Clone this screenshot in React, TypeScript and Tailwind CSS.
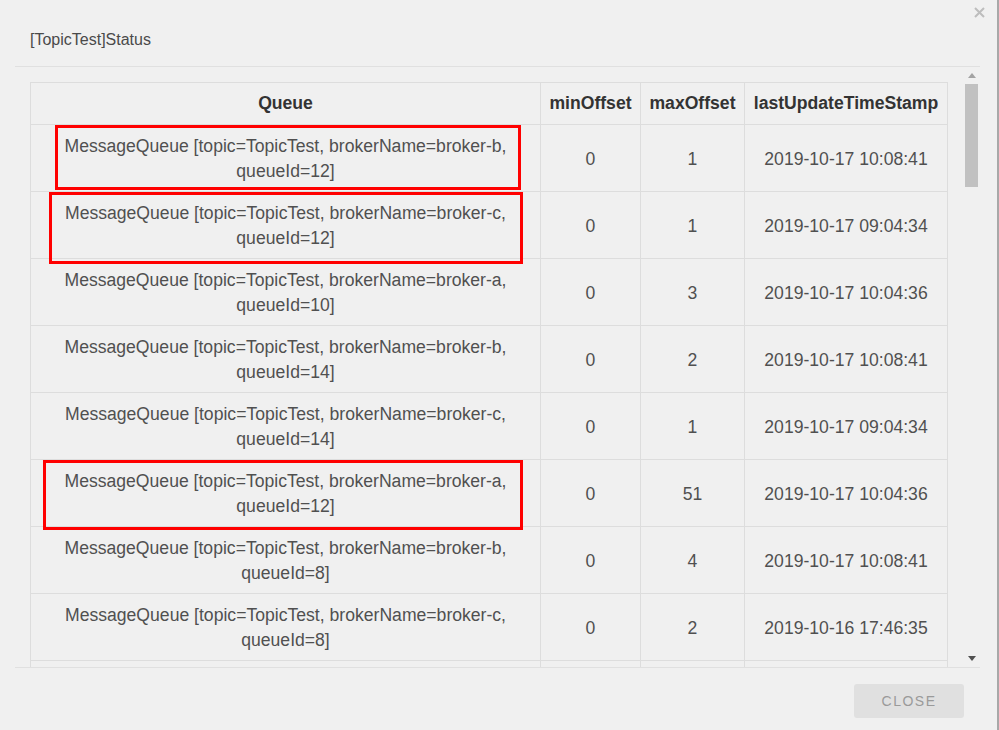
import React from "react";

type Row = { q1: string; q2: string; min: string; max: string; ts: string };

const rows: Row[] = [
  { q1: "MessageQueue [topic=TopicTest, brokerName=broker-b,", q2: "queueId=12]", min: "0", max: "1", ts: "2019-10-17 10:08:41" },
  { q1: "MessageQueue [topic=TopicTest, brokerName=broker-c,", q2: "queueId=12]", min: "0", max: "1", ts: "2019-10-17 09:04:34" },
  { q1: "MessageQueue [topic=TopicTest, brokerName=broker-a,", q2: "queueId=10]", min: "0", max: "3", ts: "2019-10-17 10:04:36" },
  { q1: "MessageQueue [topic=TopicTest, brokerName=broker-b,", q2: "queueId=14]", min: "0", max: "2", ts: "2019-10-17 10:08:41" },
  { q1: "MessageQueue [topic=TopicTest, brokerName=broker-c,", q2: "queueId=14]", min: "0", max: "1", ts: "2019-10-17 09:04:34" },
  { q1: "MessageQueue [topic=TopicTest, brokerName=broker-a,", q2: "queueId=12]", min: "0", max: "51", ts: "2019-10-17 10:04:36" },
  { q1: "MessageQueue [topic=TopicTest, brokerName=broker-b,", q2: "queueId=8]", min: "0", max: "4", ts: "2019-10-17 10:08:41" },
  { q1: "MessageQueue [topic=TopicTest, brokerName=broker-c,", q2: "queueId=8]", min: "0", max: "2", ts: "2019-10-16 17:46:35" },
];

export default function App() {
  return (
    <div
      className="w-[999px] h-[730px] bg-[#f0f0f0] border-r-2 border-[#a8a8a8] flex flex-col overflow-hidden"
      style={{ fontFamily: '"Liberation Sans", Arial, sans-serif' }}
    >
      {/* Header */}
      <div className="h-[66px] flex flex-row justify-between shrink-0">
        <div className="pl-[30px] pt-[28px] text-[16px] leading-6 text-[#4a4a4a]">[TopicTest]Status</div>
        <div className="pt-[7px] pr-[12px]">
          <svg width="11" height="11" viewBox="0 0 11 11">
            <path d="M1 1 L10 10 M10 1 L1 10" stroke="#bdbdbd" strokeWidth="2" />
          </svg>
        </div>
      </div>

      {/* Content */}
      <div className="ml-[15px] w-[965px] h-[602px] shrink-0 border-y border-[#e0e0e0] flex flex-row overflow-hidden">
        <div className="flex-1 overflow-hidden pl-[15px] pt-[15px]">
          <div className="relative w-[917px]">
            <table className="table-fixed border-collapse w-[917px] text-[17.6px] text-[#505050]">
              <colgroup>
                <col className="w-[510px]" />
                <col className="w-[100px]" />
                <col className="w-[104px]" />
                <col className="w-[203px]" />
              </colgroup>
              <thead>
                <tr>
                  <th className="border border-[#dddddd] py-[8px] leading-[25px] font-bold text-[#333333] text-center">Queue</th>
                  <th className="border border-[#dddddd] py-[8px] leading-[25px] font-bold text-[#333333] text-center">minOffset</th>
                  <th className="border border-[#dddddd] py-[8px] leading-[25px] font-bold text-[#333333] text-center">maxOffset</th>
                  <th className="border border-[#dddddd] py-[8px] leading-[25px] font-bold text-[#333333] text-center whitespace-nowrap">lastUpdateTimeStamp</th>
                </tr>
              </thead>
              <tbody>
                {rows.map((r, i) => (
                  <tr key={i}>
                    <td className="border border-[#dddddd] pt-[9px] pb-[7px] text-center leading-[25px] whitespace-nowrap">
                      <div>{r.q1}</div>
                      <div>{r.q2}</div>
                    </td>
                    <td className="border border-[#dddddd] pt-[9px] pb-[7px] text-center leading-[25px]">{r.min}</td>
                    <td className="border border-[#dddddd] pt-[9px] pb-[7px] text-center leading-[25px]">{r.max}</td>
                    <td className="border border-[#dddddd] pt-[9px] pb-[7px] text-center leading-[25px] whitespace-nowrap">{r.ts}</td>
                  </tr>
                ))}
                <tr>
                  <td className="border border-[#dddddd] h-[66px]"></td>
                  <td className="border border-[#dddddd] h-[66px]"></td>
                  <td className="border border-[#dddddd] h-[66px]"></td>
                  <td className="border border-[#dddddd] h-[66px]"></td>
                </tr>
              </tbody>
            </table>
            {/* annotation boxes */}
            <div className="absolute left-[25px] top-[43px] w-[466px] h-[65px] border-[3px] border-[#ff0000]" />
            <div className="absolute left-[19px] top-[110px] w-[474px] h-[72px] border-[3px] border-[#ff0000]" />
            <div className="absolute left-[13px] top-[378px] w-[480px] h-[70px] border-[3px] border-[#ff0000]" />
          </div>
        </div>
        {/* Scrollbar */}
        <div className="w-[17px] shrink-0 flex flex-col">
          <div className="h-[17px] flex items-center justify-center">
            <svg width="8" height="5" viewBox="0 0 8 5">
              <path d="M0 5 L4 0 L8 5 Z" fill="#a3a3a3" />
            </svg>
          </div>
          <div className="flex-1 flex flex-col">
            <div className="ml-[2px] w-[13px] h-[103px] bg-[#c1c1c1]" />
          </div>
          <div className="h-[17px] flex items-center justify-center">
            <svg width="8" height="5" viewBox="0 0 8 5">
              <path d="M0 0 L8 0 L4 5 Z" fill="#505050" />
            </svg>
          </div>
        </div>
      </div>

      {/* Footer */}
      <div className="flex flex-row justify-end pr-[33px] pt-[16px]">
        <div className="w-[110px] h-[34px] rounded-[3px] bg-[#e0e0e0] flex items-center justify-center text-[14px] tracking-[1.5px] text-[#9a9a9a]">
          CLOSE
        </div>
      </div>
    </div>
  );
}
